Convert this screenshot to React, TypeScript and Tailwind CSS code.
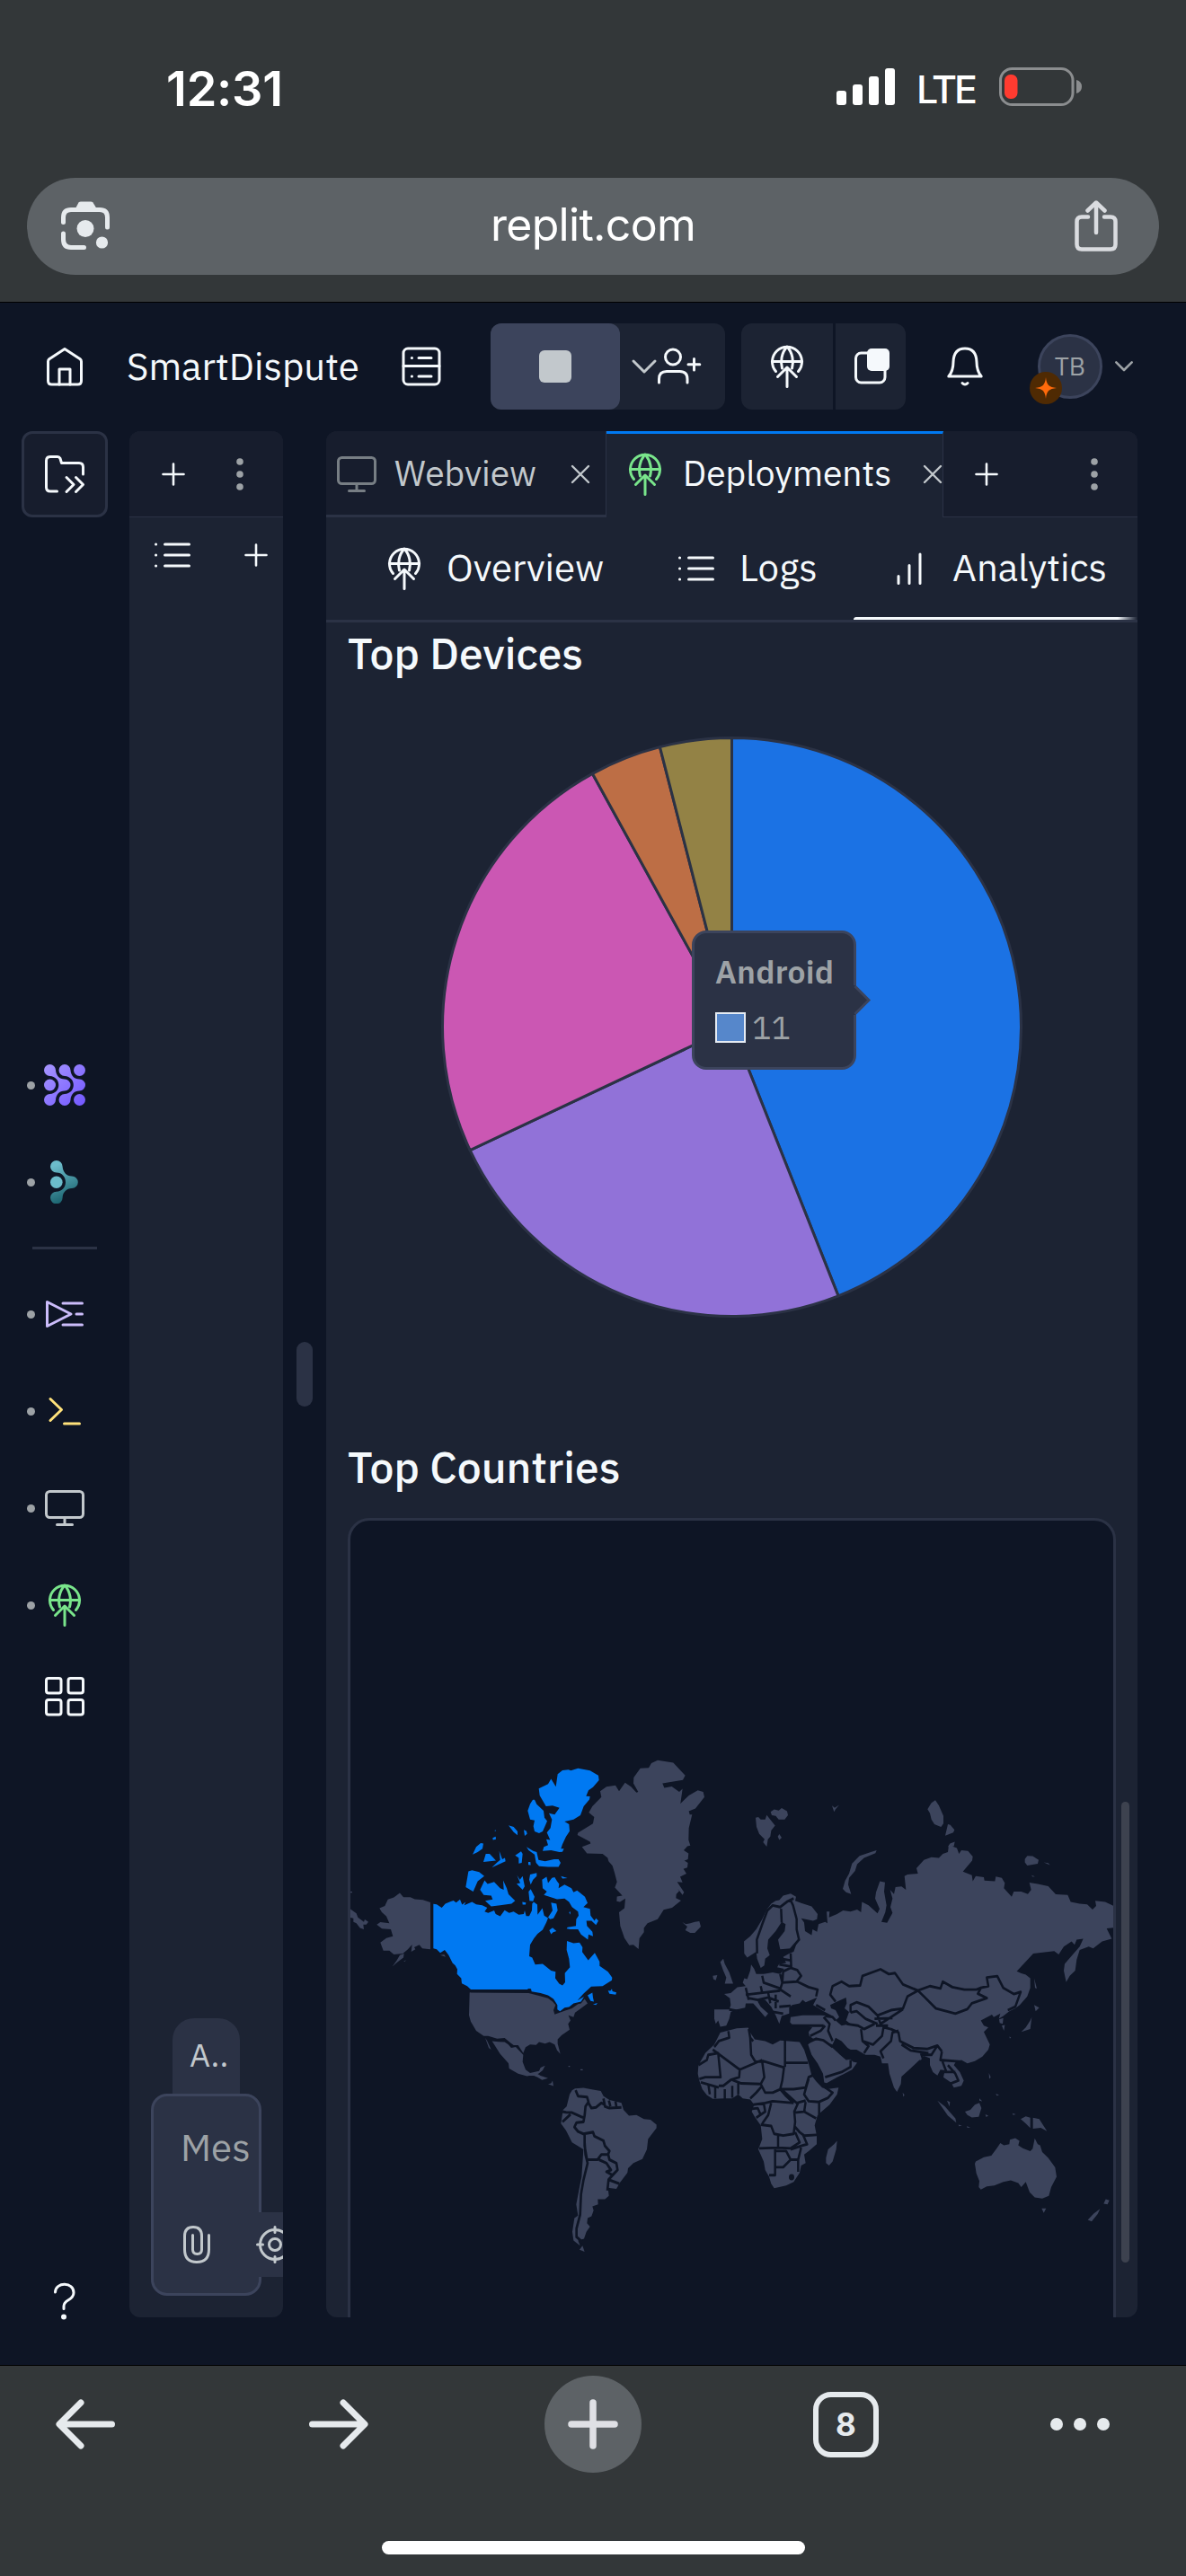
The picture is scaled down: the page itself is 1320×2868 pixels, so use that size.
import React from "react";

type IconProps = {
  w: number;
  h: number;
  color?: string;
  sw?: number;
  className?: string;
  children: React.ReactNode;
};

function Icon({ w, h, color = "#f5f9fc", sw = 3, className = "", children }: IconProps) {
  return (
    <svg
      width={w}
      height={h}
      viewBox={`0 0 ${w} ${h}`}
      fill="none"
      stroke={color}
      strokeWidth={sw}
      strokeLinecap="round"
      strokeLinejoin="round"
      className={`block shrink-0 overflow-visible ${className}`}
    >
      {children}
    </svg>
  );
}

function DeployIcon({ color, className }: { color?: string; className?: string }) {
  return (
    <Icon w={36} h={48} color={color} className={className}>
      <path d="M5.500 29.500 A16.500 16.500 0 1 1 30.500 29.500" />
      <path d="M1.500 18.500 H34.500" />
      <path d="M12.500 26 C10.500 19 11.500 9 18 2 C24.500 9 25.500 19 23.500 26" />
      <path d="M7.500 35.500 L18 25 L28.500 35.500 M18 26 V46.500" />
    </Icon>
  );
}

function MonitorIcon({ color, className }: { color: string; className?: string }) {
  return (
    <Icon w={44} h={40} color={color} className={className}>
      <rect x="1.5" y="1.500" width="41" height="29" rx="4" />
      <path d="M22 31 V38.500 M13.500 38.500 H30.500" />
    </Icon>
  );
}

function ListIcon({ className }: { className?: string }) {
  return (
    <Icon w={40} h={28} className={className}>
      <path d="M11.500 2 H38.500 M11.500 14 H38.500 M11.500 26 H38.500 M1.500 2 h.1 M1.500 14 h.1 M1.500 26 h.1" />
    </Icon>
  );
}

function PlusIcon({ className }: { className?: string }) {
  return (
    <Icon w={26} h={26} sw={2.6} className={className}>
      <path d="M13 1.500 V24.500 M1.500 13 H24.500" />
    </Icon>
  );
}

function KebabIcon({ className }: { className?: string }) {
  return (
    <Icon w={8} h={36} className={className}>
      <g fill="#9da2a6" stroke="none">
        <circle cx="4" cy="4" r="3.800" />
        <circle cx="4" cy="18" r="3.800" />
        <circle cx="4" cy="32" r="3.800" />
      </g>
    </Icon>
  );
}

function CloseIcon({ className }: { className?: string }) {
  return (
    <Icon w={22} h={22} color="#c2c8cc" sw={2.4} className={className}>
      <path d="M2 2 L20 20 M20 2 L2 20" />
    </Icon>
  );
}

function StatusBar() {
  return (
    <div className="flex h-[198px] items-start pt-[75px] font-['Inter']">
      <div className="mt-[2px] ml-[185px] w-[746px] text-[54px] leading-[44px] font-semibold whitespace-nowrap text-white tracking-[-0.2px]">
        12:31
      </div>
      <svg width="65" height="43" viewBox="0 0 65 43" fill="#fff">
        <rect x="0" y="26" width="11" height="16" rx="3" />
        <rect x="18" y="19" width="11" height="23" rx="3" />
        <rect x="36" y="10" width="11" height="32" rx="3" />
        <rect x="54" y="1" width="11" height="41" rx="3" />
      </svg>
      <div className="ml-[24px] w-[92px] text-[43px] leading-[48px] font-medium whitespace-nowrap text-white tracking-[-3.2px]">
        LTE
      </div>
      <svg width="93" height="43" viewBox="0 0 93 43">
        <rect x="1.5" y="1.500" width="80.500" height="40" rx="13" fill="none" stroke="#8b8d8f" strokeWidth="3" />
        <path d="M86 14 Q92 15.500 92 21.500 Q92 27.500 86 29 Z" fill="#8b8d8f" />
        <rect x="6" y="8" width="14.500" height="27" rx="6.500" fill="#ff3b30" />
      </svg>
    </div>
  );
}

function UrlBar() {
  return (
    <div className="mx-[30px] flex h-[108px] items-center justify-between rounded-full bg-[#5d6266] pr-[46px] pl-[38px] font-['Inter']">
      <svg width="56" height="56" viewBox="0 0 56 56" fill="none" stroke="#e6eaed" strokeWidth="5" strokeLinecap="round">
        <path d="M2.500 23.500 V18 Q2.500 9.500 11 9.500 H43 Q51.500 9.500 51.500 18 V29" />
        <path d="M2.500 36 V42.500 Q2.500 51.500 11 51.500 H25.500" />
        <path d="M15.500 9 L19.500 1.500 Q20.500 .5 22 .5 H33 Q34.500 .5 35.500 1.500 L40 9 Z" fill="#e6eaed" stroke="none" />
        <circle cx="27" cy="30.500" r="9.500" fill="#e6eaed" stroke="none" />
        <circle cx="45.500" cy="46" r="6.600" fill="#e6eaed" stroke="none" />
      </svg>
      <span className="-mt-[3px] text-[50px] whitespace-nowrap text-white tracking-[-0.7px]">replit.com</span>
      <svg width="48" height="58" viewBox="0 0 48 58" fill="none" stroke="#dadce0" strokeWidth="4.500" strokeLinecap="round" strokeLinejoin="round">
        <path d="M15 18.500 H8 Q2.500 18.500 2.500 24 V49 Q2.500 54.500 8 54.500 H40 Q45.500 54.500 45.500 49 V24 Q45.500 18.500 40 18.500 H33" />
        <path d="M24 36 V3 M14.500 11.500 L24 2.500 L33.500 11.500" />
      </svg>
    </div>
  );
}

function AppHeader() {
  return (
    <div className="flex h-[144px] shrink-0 items-center border-t border-black pb-px">
      <Icon w={40} h={43} className="ml-[52px]">
        <path d="M1.500 37 V15.500 Q1.500 13.800 2.800 12.800 L20 1.500 L37.200 12.800 Q38.500 13.800 38.500 15.500 V37 Q38.500 41 34.500 41 H5.500 Q1.500 41 1.500 37 Z" />
        <path d="M14 41 V24 H26 V41" />
      </Icon>
      <div className="-mt-[2px] ml-[49px] w-[306px] text-[42px] whitespace-nowrap text-[#f5f9fc]">SmartDispute</div>
      <Icon w={44} h={44}>
        <rect x="2" y="2" width="40" height="40" rx="5" />
        <path d="M2 21.500 H42 M19 12.500 H33 M19 33 H33 M11.300 12.500 h.2 M11.300 33 h.2" />
      </Icon>
      <div className="ml-[55px] flex h-24 w-[261px] items-center rounded-xl bg-[#1c2333]">
        <div className="flex h-24 w-36 items-center justify-center rounded-xl bg-[#3c445c]">
          <div className="h-9 w-9 rounded-md bg-[#c2c8cc]" />
        </div>
        <Icon w={28} h={16} color="#c2c8cc" className="ml-[13px]">
          <path d="M2 2 L14 14 L26 2" />
        </Icon>
        <Icon w={48} h={40} className="ml-px">
          <circle cx="17" cy="9.500" r="8.500" />
          <path d="M1.500 38 V34 Q1.500 25.500 10 25.500 H24.500 Q33 25.500 33 34 V38 M40.500 11.500 V24 M34 17.800 H46.800" />
        </Icon>
      </div>
      <div className="ml-[18px] flex h-24 gap-[3px] overflow-hidden rounded-xl">
        <div className="flex w-[102px] items-center bg-[#1c2333] pl-[33px]">
          <DeployIcon />
        </div>
        <div className="flex w-[78px] items-center bg-[#1c2333] pl-[21px]">
          <Icon w={40} h={40}>
            <rect x="1.500" y="5" width="32.500" height="33" rx="6" />
            <rect x="14" y="0" width="25" height="25" rx="5" fill="#f5f9fc" stroke="none" />
          </Icon>
        </div>
      </div>
      <Icon w={40} h={44} className="ml-[46px]">
        <path d="M1.800 33 Q7 27 7 17 Q7.500 2 20 2 Q32.500 2 33 17 Q33 27 38.200 33 Z" />
        <path d="M17 40.500 Q20 43.500 23 40.500" />
      </Icon>
      <div className="relative ml-[61px] flex h-[72px] w-[72px] items-center justify-center rounded-full border-3 border-[#3c445c] bg-[#2b3245] text-[28px] text-[#9da2a6]">
        TB
        <div className="absolute top-[39px] -left-3 flex h-9 w-9 items-center justify-center rounded-full bg-[#4f2a03]">
          <svg width="24" height="24" viewBox="0 0 24 24" fill="#ff6a0b">
            <path d="M12 0 C12.800 8.500 15.500 11.200 24 12 C15.500 12.800 12.800 15.500 12 24 C11.200 15.500 8.500 12.800 0 12 C8.500 11.200 11.200 8.500 12 0 Z" />
          </svg>
        </div>
      </div>
      <Icon w={20} h={12} color="#9da2a6" sw={2.600} className="ml-[14px]">
        <path d="M1.300 1.300 L10 10 L18.700 1.300" />
      </Icon>
    </div>
  );
}

function DockItem({ children }: { children: React.ReactNode }) {
  return (
    <div className="flex h-[108px] w-full shrink-0 items-center pl-[30px]">
      <div className="h-[9px] w-[9px] rounded-full bg-[#9da2a6]" />
      <div className="flex w-[66px] items-center justify-center">{children}</div>
    </div>
  );
}

function Dock() {
  return (
    <div className="flex w-36 shrink-0 flex-col">
      <div className="ml-6 flex h-24 w-24 shrink-0 items-center justify-center rounded-xl border-3 border-[#2b3245] bg-[#171d2d]">
        <Icon w={44} h={42}>
          <path d="M13.500 40 H6 Q1.500 40 1.500 35.500 V6 Q1.500 1.500 6 1.500 H14 Q16 1.500 17 3.500 L18.500 8.500 H38 Q42.500 8.500 42.500 13 V21" />
          <path d="M24 24.500 L32 32.500 L24 40.500 M34.500 24.500 L42.500 32.500 L34.500 40.500" />
        </Icon>
      </div>
      <div className="mt-[578px] flex flex-col">
        <DockItem>
          <svg width="46" height="46" viewBox="0 0 46 46" fill="url(#violet)">
            <defs>
              <linearGradient id="violet" x1="0" y1="0" x2="46" y2="46" gradientUnits="userSpaceOnUse">
                <stop offset="0" stopColor="#a796ff" />
                <stop offset="1" stopColor="#7257ff" />
              </linearGradient>
            </defs>
            <path d="M6.500 0 A6.500 6.500 0 0 1 13 6.500 C13.500 12.500 17 16.500 23 16.500 A6.500 6.500 0 0 1 23 29.500 C17 29.500 13.500 33.500 13 39.500 A6.500 6.500 0 1 1 6.500 33 C12.500 32.500 16.300 28.500 16.300 23 C16.300 17.500 12.500 13.500 6.500 13 A6.500 6.500 0 0 1 6.500 0 Z" />
            <path d="M23 0 A6.500 6.500 0 0 1 29.500 6.500 C30 12.500 33.500 16.500 39.500 16.500 A6.500 6.500 0 0 1 39.500 29.500 C33.500 29.500 30 33.500 29.500 39.500 A6.500 6.500 0 1 1 23 33 C29 32.500 32.800 28.500 32.800 23 C32.800 17.500 29 13.500 23 13 A6.500 6.500 0 0 1 23 0 Z" />
            <circle cx="6.500" cy="23" r="6.500" />
            <circle cx="39.500" cy="6.500" r="6.500" />
            <circle cx="39.500" cy="39.500" r="6.500" />
          </svg>
        </DockItem>
        <DockItem>
          <svg width="32" height="48" viewBox="0 0 32 48" fill="url(#teal)">
            <defs>
              <linearGradient id="teal" x1="4" y1="6" x2="20" y2="44" gradientUnits="userSpaceOnUse">
                <stop offset="0" stopColor="#6cbccb" />
                <stop offset="1" stopColor="#1b6470" />
              </linearGradient>
            </defs>
            <path d="M6.800 0 A6.800 6.800 0 0 1 13.600 6.800 C14 13 18 17.500 24 17.500 A6.800 6.800 0 0 1 24 31.100 C18 31.100 14 35.500 13.600 41.200 A6.800 6.800 0 1 1 6.800 34.700 C13 34.700 17 30 17 24.300 C17 18.500 13 13.600 6.800 13.600 A6.800 6.800 0 0 1 6.800 0 Z" />
            <circle cx="6.800" cy="24.300" r="6.800" fill="#6cbccb" />
          </svg>
        </DockItem>
      </div>
      <div className="mt-[18px] ml-9 h-[3px] w-[72px] shrink-0 bg-[#2b3245]" />
      <div className="mt-[18px] flex flex-col">
        <DockItem>
          <Icon w={42} h={30} color="#cbbcfa">
            <path d="M1.500 1.500 V28.500 L28 15 Z M19 3 H40.500 M34 15 H40.500 M19 27 H40.500" />
          </Icon>
        </DockItem>
        <DockItem>
          <Icon w={36} h={32} color="#ffe27b">
            <path d="M2 2.500 L14.500 14.500 L2 26.500 M17.500 30 H34.500" />
          </Icon>
        </DockItem>
        <DockItem>
          <MonitorIcon color="#c2c8cc" />
        </DockItem>
        <DockItem>
          <DeployIcon color="#79e58b" />
        </DockItem>
      </div>
      <Icon w={44} h={44} className="mt-[26px] ml-[50px]">
        <rect x="1.500" y="1.500" width="16.500" height="16.500" rx="2.500" />
        <rect x="26" y="1.500" width="16.500" height="16.500" rx="2.500" />
        <rect x="1.500" y="25.500" width="16.500" height="16.500" rx="2.500" />
        <rect x="26" y="25.500" width="16.500" height="16.500" rx="2.500" />
      </Icon>
      <Icon w={24} h={42} className="mt-[631px] ml-[60px]">
        <path d="M1.500 10 C2 -1.800 22 -1.500 22 10.500 C22 19.500 11 18 11 25.500 V28.500" />
        <circle cx="11" cy="37.500" r="1.500" fill="#f5f9fc" />
      </Icon>
    </div>
  );
}

function AssistantPanel() {
  return (
    <div className="flex h-[2100px] w-[171px] shrink-0 flex-col overflow-hidden rounded-xl bg-[#1c2333]">
      <div className="flex h-24 shrink-0 items-center border-b border-[#2b3245] bg-[#171d2d]">
        <PlusIcon className="ml-[36px]" />
        <KebabIcon className="ml-[57px]" />
      </div>
      <div className="flex h-[84px] shrink-0 items-center">
        <ListIcon className="ml-[28px]" />
        <PlusIcon className="ml-[60px]" />
      </div>
      <div className="mt-auto ml-12 flex h-[84px] w-[75px] items-center rounded-t-3xl bg-[#2b3245] pb-[2px] pl-[19px] text-[36px] text-[#c2c8cc]">
        A..
      </div>
      <div className="mb-6 ml-6 h-[225px] w-[123px] shrink-0 rounded-[18px] border-3 border-[#3c445c] bg-[#2b3245]">
        <div className="flex h-[129px] items-center pl-[30px] text-[42px] text-[#9da2a6]">
          <span className="-mt-4 whitespace-nowrap">Mes</span>
        </div>
        <div className="flex h-[72px] w-[150px] items-center bg-[#2b3245] pl-[33px]">
          <Icon w={30} h={42} color="#c2c8cc">
            <path d="M28.500 10.500 V26.500 Q28.500 40.500 15 40.500 Q1.500 40.500 1.500 26.500 V11.500 Q1.500 1.500 11 1.500 Q20.500 1.500 20.500 11.500 V26.500 Q20.500 31.500 15.500 31.500 Q10.500 31.500 10.500 26.500 V10.500" />
          </Icon>
          <Icon w={42} h={42} color="#c2c8cc" className="ml-[51px]">
            <circle cx="21" cy="21" r="16.500" />
            <circle cx="21" cy="21" r="6.500" />
            <path d="M21 1.500 V7.500 M21 34.500 V40.500 M1.500 21 H7.500 M34.500 21 H40.500" />
          </Icon>
        </div>
      </div>
    </div>
  );
}

const SLICES = [
  { label: "Android", value: 11, color: "#1b72e4" },
  { label: "Windows", value: 6, color: "#9172d8" },
  { label: "iPhone", value: 6, color: "#cb57b3" },
  { label: "Macintosh", value: 1, color: "#bd6e45" },
  { label: "Other", value: 1, color: "#938245" },
];

function DevicesPie() {
  const cx = 451.5;
  const cy = 378.5;
  const r = 322;
  const total = SLICES.reduce((sum, s) => sum + s.value, 0);
  const at = (v: number) => {
    const a = (v / total) * Math.PI * 2;
    return `${(cx + r * Math.sin(a)).toFixed(2)} ${(cy - r * Math.cos(a)).toFixed(2)}`;
  };
  let start = 0;
  return (
    <div className="relative h-[756px]">
      <svg width="903" height="756" viewBox="0 0 903 756">
        {SLICES.map((s) => {
          const from = at(start);
          start += s.value;
          return (
            <path
              key={s.label}
              d={`M${cx} ${cy} L${from} A${r} ${r} 0 0 1 ${at(start)} Z`}
              fill={s.color}
              stroke="#2b3245"
              strokeWidth="3"
              strokeLinejoin="round"
            />
          );
        })}
      </svg>
      <div className="absolute top-[271px] left-[407px] h-[155px] w-[183px] rounded-2xl border-3 border-[#3c445c] bg-[#2b3245] pt-[16px] pl-[23px] text-[#9da2a6]">
        <div className="text-[35.5px] leading-[54px] font-semibold whitespace-nowrap tracking-[0.2px]">Android</div>
        <div className="mt-[8px] flex items-center text-[36px] leading-[54px]">
          <span className="mr-[7px] h-[34px] w-[34px] border-2 border-[#e5ebf3] bg-[#5687cb]" />
          11
        </div>
        <svg className="absolute top-[58px] -right-[19px]" width="19" height="34" viewBox="0 0 19 34">
          <path d="M0 0 H1.500 L17 16.500 L1.500 33 H0 Z" fill="#2b3245" />
          <path d="M1.500 1 L17 16.500 L1.500 32" fill="none" stroke="#3c445c" strokeWidth="3" />
        </svg>
      </div>
    </div>
  );
}

const NORTH_AMERICA =
  "M1026 100 L1035 86 1056 78 1108 85 1148 122 1140 135 1072 145 1078 158 1103 154 1128 170 1139 161 1132 204 1160 180 1190 165 1208 170 1212 185 1182 218 1160 226 1163 236 1171 236 1160 275 1159 310 1165 326 1155 328 1143 340 1159 349 1157 366 1145 370 1157 376 1155 390 1142 394 1152 408 1131 417 1139 433 1121 432 1144 462 1139 470 1122 450 1128 458 1118 468 1117 479 1134 486 1104 507 1076 513 1056 540 1022 552 1010 566 1010 578 995 596 992 627 975 615 961 616 945 595 931 560 927 520 945 508 948 480 930 490 919 488 920 474 938 472 920 455 913 448 920 432 912 405 905 385 892 372 889 362 872 350 820 349 803 330 832 320 830 315 788 295 790 289 840 262 844 243 826 230 838 212 868 185 864 168 885 155 915 151 927 168 947 143 967 155 985 172 991 170 975 145 976 128 998 101 Z" +
  "M127 508 L145 502 155 483 175 477 195 464 207 476 230 476 245 482 272 484 297 491 297 628 270 625 260 615 243 622 247 628 233 635 236 614 222 628 205 640 175 643 160 632 140 632 130 608 150 595 172 590 165 570 135 568 118 556 130 549 160 552 150 532 135 520 Z" +
  "M209 640 L207 652 187 665 170 678 185 660 195 645 Z M330 645 L343 643 348 650 Z M208 662 L216 660 211 664 Z" +
  "M28 510 L50 523 55 535 75 548 78 541 90 548 83 556 73 556 75 570 62 566 50 552 40 548 40 538 28 535 Z M28 460 h8 v3 h-8 Z" +
  "M428 754 L625 755 660 763 690 770 705 780 715 790 708 805 712 817 745 807 770 800 790 787 800 785 812 772 822 785 800 800 780 812 775 825 758 820 765 835 757 845 762 862 735 878 722 890 722 902 731 932 720 922 712 905 695 898 680 902 660 898 650 906 630 905 615 913 607 930 590 907 575 907 565 900 545 886 520 888 490 880 475 880 450 865 432 838 426 820 427 790 Z M430 752 L440 770 433 778 Z" +
  "M503 895 L525 897 545 898 557 905 567 915 582 912 607 935 605 955 615 978 630 988 660 982 665 972 680 966 672 980 658 990 620 997 590 990 560 975 558 960 530 932 Z M480 885 L487 895 500 920 492 915 Z M632 992 L650 988 665 996 690 1003 670 1008 655 1000 Z M690 1020 L700 1018 705 1010 708 1026 Z M758 967 h5 v3 h-5 Z M798 977 h8 v3 h-8 Z";

const CANADA =
  "M307 496 L318 497 335 507 347 495 365 489 374 486 383 492 396 483 403 498 415 490 410 500 436 490 450 497 470 500 487 507 478 518 490 522 510 515 515 525 530 532 545 514 560 522 575 518 592 527 609 525 612 515 617 531 627 531 636 515 637 495 642 490 654 498 655 527 671 508 677 530 690 537 684 550 672 571 655 583 643 596 630 615 627 648 637 652 647 672 672 670 700 690 715 693 714 712 727 728 738 733 747 724 746 697 763 680 760 655 752 630 753 604 775 610 795 608 805 622 804 636 824 660 846 638 862 664 862 676 890 693 904 710 903 718 872 735 834 736 808 757 788 777 810 766 800 780 775 785 760 796 745 798 730 808 721 803 721 790 708 772 690 762 665 755 635 751 633 743 625 742 620 745 432 745 420 735 402 727 400 712 386 700 387 686 380 675 371 668 358 645 345 630 330 638 318 628 307 625 Z" +
  "M903 743 L898 749 890 748 895 757 916 760 918 753 905 750 Z M822 762 L838 754 840 768 843 780 832 778 Z M840 788 L855 784 850 790 Z" +
  "M716 155 L722 118 738 107 758 105 766 108 790 101 830 108 858 122 860 136 840 156 825 165 817 182 830 183 828 192 809 212 798 238 775 250 745 256 760 264 762 284 750 300 738 322 733 335 743 335 738 344 728 345 700 340 672 342 676 330 690 325 684 308 697 310 686 288 698 275 703 250 693 232 712 236 728 216 705 210 683 212 662 180 659 160 690 147 700 132 Z" +
  "M622 225 L630 205 639 193 645 193 652 206 675 225 678 245 687 255 672 285 660 290 645 285 641 270 645 253 630 250 Z" +
  "M558 267 L575 272 588 285 588 296 575 287 Z M609 280 L618 284 620 292 612 298 Z M505 304 L515 300 516 308 506 310 Z M511 282 L516 281 514 285 Z M438 352 L450 330 465 319 474 320 471 335 455 345 Z M474 374 L482 350 495 350 516 370 Z M527 342 L537 366 546 362 548 372 502 390 520 375 530 368 Z M580 355 L600 343 605 350 602 376 592 378 592 362 Z M618 330 L640 342 652 345 658 368 680 372 710 366 725 366 732 376 725 388 690 388 660 386 650 376 645 352 625 340 Z M624 374 L631 374 632 383 624 382 Z" +
  "M424 401 L436 398 460 403 477 415 455 430 440 460 415 447 Z M463 455 L478 427 488 438 510 432 530 450 542 455 540 427 552 450 558 468 580 487 568 495 530 500 500 503 480 487 505 483 500 472 475 470 Z" +
  "M586 412 L596 425 605 415 612 445 605 455 585 437 597 435 Z M630 410 L652 406 652 415 640 425 632 440 627 425 Z M625 460 L632 453 645 475 640 488 628 487 Z M604 490 L616 492 615 498 605 498 Z" +
  "M670 425 L685 417 690 435 703 420 712 418 720 430 727 438 725 450 745 440 768 450 775 462 787 457 813 475 822 493 808 505 830 510 832 530 845 545 850 538 858 545 850 557 835 545 818 545 820 560 838 577 840 590 825 585 823 600 800 585 790 570 765 570 752 568 755 564 783 560 784 540 792 530 790 518 770 505 760 490 745 480 720 482 676 470 686 460 672 450 Z M733 415 L755 421 738 422 Z M700 492 L718 495 722 515 708 538 697 540 690 535 705 515 Z M694 572 L705 565 718 575 707 578 700 584 Z M760 520 L765 518 764 527 Z";

const SOUTH_AMERICA =
  "M770 1038 L780 1033 808 1031 840 1036 866 1040 875 1055 895 1066 935 1075 942 1095 960 1112 985 1110 1010 1122 1032 1124 1052 1138 1052 1148 1024 1180 1020 1210 1005 1238 975 1250 957 1265 955 1278 930 1307 918 1325 890 1322 893 1345 880 1355 856 1355 857 1370 838 1376 842 1388 835 1405 822 1410 820 1425 830 1435 818 1450 810 1470 790 1475 797 1490 775 1475 771 1450 778 1410 790 1403 784 1370 795 1320 802 1290 808 1210 770 1190 750 1155 733 1135 740 1095 752 1085 762 1050 Z M795 1502 L805 1490 812 1508 Z" +
  "M1138 549 L1150 555 1165 552 1180 548 1195 546 1200 562 1180 580 1165 580 1148 572 1155 562 Z";

const SOUTH_AMERICA_BORDERS =
  "M782 1038 L790 1055 820 1058 825 1072 815 1085 812 1112 M825 1075 L835 1090 850 1088 868 1075 880 1080 M875 1062 L880 1085 895 1090 935 1088 M893 1068 L898 1085 M915 1070 L918 1085 M738 1100 L750 1102 770 1103 800 1115 812 1118 M738 1130 L765 1108 M812 1112 L808 1130 785 1132 778 1145 790 1158 808 1165 840 1160 845 1172 875 1185 880 1200 895 1215 890 1225 868 1225 855 1240 820 1240 812 1200 812 1165 M812 1190 L815 1225 822 1250 808 1300 800 1340 797 1400 785 1440 785 1465 805 1480 M890 1222 L895 1240 918 1250 922 1270 905 1285 885 1275 900 1270 885 1250 860 1240 M922 1270 L892 1298 928 1310 M892 1298 L888 1330";

const EURASIA =
  "M144 605 L165 590 185 570 205 540 220 512 235 495 250 487 262 485 275 472 300 466 318 475 315 487 335 493 370 503 390 525 388 540 375 545 335 538 345 550 348 575 370 587 373 570 388 577 393 555 415 548 423 552 420 518 430 518 428 535 455 525 475 515 500 518 522 512 535 520 538 490 560 500 590 523 597 510 582 480 585 462 598 430 615 433 612 460 620 500 616 520 603 548 622 551 640 522 633 505 640 480 632 455 645 467 650 447 670 445 685 455 680 415 690 410 725 408 720 392 745 368 770 360 795 362 808 350 825 345 828 325 855 333 862 350 870 340 892 342 908 358 906 370 875 402 905 412 908 430 918 415 945 418 947 428 982 430 985 416 1005 420 1015 435 1012 450 1038 475 1045 460 1070 460 1092 467 1103 455 1097 434 1125 438 1160 444 1185 468 1225 470 1235 490 1265 495 1290 497 1308 512 1320 502 1317 487 1350 490 1380 502 1380 565 1355 567 1372 597 1340 605 1310 625 1295 620 1265 630 1255 658 1250 690 1232 705 1220 723 1212 690 1215 670 1235 650 1265 620 1277 597 1255 600 1248 615 1238 605 1212 620 1195 643 1180 633 1110 640 1055 692 1070 698 1085 702 1100 712 1100 740 1090 765 1065 790 1050 800 1030 808 1010 822 995 830 1000 815 978 825 972 818 935 835 945 850 960 855 945 868 965 905 960 920 940 940 915 953 890 960 870 950 850 957 845 965 865 985 878 1010 870 1025 845 1030 835 1015 810 1000 815 980 800 978 790 995 775 985 765 965 765 945 745 938 735 950 730 950 700 975 670 998 668 1020 655 1043 645 1030 630 990 625 960 605 960 600 940 580 935 550 935 520 920 500 920 490 915 470 895 450 885 440 905 400 895 375 888 362 880 360 868 372 855 350 850 310 852 298 840 300 825 340 820 400 820 440 822 410 808 375 790 388 768 350 782 340 775 330 785 305 790 295 798 295 815 270 822 262 845 250 820 235 795 215 775 200 772 190 780 200 795 225 815 215 825 195 805 175 785 150 785 148 798 120 803 100 810 95 830 85 850 65 853 58 835 50 845 45 830 45 803 95 803 100 790 97 770 78 758 100 755 122 738 150 735 140 725 145 712 155 715 165 690 168 672 178 685 185 700 210 700 240 695 265 700 278 685 255 680 262 670 285 668 275 650 295 640 310 635 325 598 300 625 265 628 258 600 280 575 283 555 270 548 250 575 225 600 222 625 230 645 215 655 212 675 200 682 188 655 185 635 155 652 145 640 Z" +
  "M358 905 L375 892 400 894 420 900 440 915 465 935 485 950 500 948 508 955 522 958 505 978 475 992 455 1000 420 1017 412 1015 408 990 390 960 370 935 Z" +
  "M183 245 L192 243 200 250 215 250 220 237 230 248 248 268 235 282 232 300 224 308 220 329 208 316 213 308 195 292 186 272 Z M233 228 L245 221 260 224 270 217 288 226 291 238 280 250 260 250 250 240 237 238 Z M257 300 L262 293 270 303 262 310 Z M438 210 L447 216 462 208 450 220 445 228 Z" +
  "M587 340 L583 348 545 362 522 380 515 400 495 420 492 440 502 467 485 462 474 452 482 428 495 408 505 378 530 356 570 344 Z M757 220 L770 202 783 194 795 210 810 240 810 262 802 272 780 264 770 250 765 232 Z M816 297 L825 264 833 266 847 280 843 288 Z M825 330 L832 320 848 315 845 328 Z M1082 365 L1090 356 1108 357 1128 368 1125 379 1090 384 1082 375 Z M1145 375 L1160 377 1166 383 Z M1104 412 L1116 416 1108 417 Z" +
  "M65 665 L75 655 80 670 95 695 108 728 80 728 85 710 75 690 Z M40 705 L55 703 50 718 42 715 Z M1113 790 L1130 798 1118 808 Z M1105 825 L1100 860 1070 868 1085 855 1100 835 Z M1005 850 L1015 848 1012 865 Z M1113 712 L1122 742 1116 740 Z M996 832 L1010 828 1008 845 998 842 Z M1030 882 L1036 884 1032 888 Z" +
  "M962 988 L968 1000 963 1005 Z M985 1048 L996 1052 988 1054 Z M790 1068 L815 1085 850 1120 853 1132 825 1112 Z M822 1068 L832 1072 830 1085 Z M882 1100 L900 1095 915 1080 930 1075 937 1090 928 1115 905 1117 890 1110 Z M930 1062 L940 1070 930 1068 Z M950 1108 L960 1112 953 1116 Z M860 1138 L872 1141 862 1143 Z M888 1143 L900 1146 890 1147 Z M1040 1105 L1052 1108 1043 1110 Z" +
  "M1068 1122 L1085 1114 1100 1118 1100 1148 1085 1135 Z M1109 1118 L1130 1122 1156 1157 1135 1147 1109 1150 Z M674 1045 L680 1052 676 1057 Z" +
  "M918 1245 L945 1233 970 1228 990 1205 1000 1192 1012 1198 1030 1195 1032 1182 1050 1177 1064 1185 1060 1198 1075 1207 1100 1215 1108 1208 1115 1178 1125 1195 1133 1198 1140 1218 1160 1235 1183 1262 1188 1290 1170 1320 1162 1345 1140 1353 1115 1350 1098 1335 1085 1305 1070 1320 1060 1308 1035 1300 1010 1305 980 1315 955 1318 935 1327 928 1320 930 1302 920 1280 915 1252 Z M1138 1382 L1153 1382 1145 1395 Z M1352 1355 L1364 1358 1358 1370 1345 1368 Z M1292 1415 L1312 1397 1333 1383 1325 1398 1305 1420 Z";

const EURASIA_BORDERS =
  "M188 640 L187 600 205 555 222 515 240 500 265 505 290 488 310 480 M268 510 L270 550 M300 485 L308 500 320 540 320 570 328 600 300 628 M270 725 L320 722 335 705 322 688 300 682 275 692 272 725 M322 722 L360 738 390 745 385 765 M272 725 L265 745 300 765 M205 705 L210 725 265 742 M265 700 L272 725 M150 760 L200 755 265 748 M160 770 L190 775 225 768 260 780 M200 735 L205 755 M150 740 L160 775 M250 760 L250 800 M225 755 L232 785 M262 795 L300 792 M240 810 L275 815 M265 655 L300 660 M262 672 L300 678 M95 803 L125 808 M300 640 L302 682" +
  "M450 780 L432 760 440 735 470 722 495 735 532 733 540 705 600 686 628 700 648 697 675 730 725 748 765 735 800 742 808 722 840 738 880 745 920 745 935 740 M725 748 L690 765 675 800 635 805 590 820 560 795 520 782 500 790 500 812 M725 748 L745 765 785 800 850 815 890 802 905 785 955 770 925 757 935 740 960 735 955 710 990 706 1010 740 1045 758 1068 752 1050 795 1025 805" +
  "M500 812 L520 808 550 830 590 845 M590 820 L600 845 635 825 675 802 M487 845 L525 850 545 860 580 845 M580 830 L640 828 M585 850 L625 850 M535 860 L540 895 575 905 605 880 610 855 635 860 M540 895 L560 910 545 930 M660 865 L640 870 635 895 600 925 610 945 M635 860 L660 870 665 895 710 915 755 918 790 908 805 925 M670 905 L700 922 760 930 M790 908 L770 935 740 935 M805 925 L800 950 870 955 M805 950 L820 985 M825 965 L850 990 860 1010 835 1018 M735 930 L745 955 M810 985 L850 985" +
  "M410 825 L430 845 425 865 440 895 M415 822 L440 825 450 835 M365 880 L400 865 415 850 M355 900 L385 888 410 893 440 912 M415 1000 L470 985 500 970 500 950 M385 790 L415 805 M298 850 L410 850";

const AFRICA =
  "M88 865 L120 858 158 856 165 870 180 890 215 895 240 905 265 893 330 898 345 920 360 960 370 995 385 1012 405 1030 420 1035 460 1030 455 1050 430 1080 390 1110 380 1140 387 1170 387 1195 360 1215 345 1225 350 1250 335 1257 330 1278 310 1305 285 1315 245 1323 235 1310 228 1290 215 1270 210 1245 192 1210 205 1180 200 1140 180 1115 170 1100 178 1080 165 1065 140 1062 125 1050 105 1062 80 1062 40 1063 20 1052 5 1035 -5 1010 -10 990 -8 965 15 930 45 905 65 870 Z M455 1185 L452 1210 440 1245 428 1257 418 1250 418 1235 425 1210 445 1195 Z";

const AFRICA_BORDERS =
  "M92 866 L95 885 60 895 45 912 M40 920 L130 978 205 950 M165 885 L168 935 182 955 205 955 M160 860 L165 885 175 895 M-8 965 L20 950 25 935 58 930 66 1000 15 1000 -5 1005 M130 978 L128 1000 100 1008 75 1025 60 1025 M105 1008 L135 1018 200 1020 M205 955 L212 1000 200 1020 M205 952 L278 972 M281 893 V970 M281 958 H358 M278 970 L272 1010 265 1035 310 1035 350 1030 360 1000 380 992 M360 1005 L345 1050 360 1070 395 1072 425 1060 440 1045 415 1030 M200 1020 L215 1045 240 1045 265 1035 285 1055 310 1075 M175 1080 L215 1075 240 1070 310 1075 M275 1040 L320 1075 350 1068 M235 1075 L225 1110 205 1135 M200 1138 L235 1142 245 1165 275 1170 310 1165 315 1130 312 1100 325 1075 M350 1072 L345 1100 385 1120 M395 1072 V1108 M312 1103 L350 1100 M315 1145 L330 1160 345 1170 387 1168 M258 1170 L258 1205 195 1207 M258 1205 L300 1207 330 1190 315 1160 M300 1210 L335 1200 355 1195 340 1165 M248 1210 V1285 H228 M248 1262 L275 1262 300 1240 285 1215 248 1215 M300 1240 L325 1240 335 1205 M325 1240 V1275 M0 1015 L60 1030 M25 1020 L30 1050 M48 1030 V1062 M80 1035 V1065 M105 1025 V1060 M125 1018 V1050 M205 1025 L185 1045 165 1062 M170 1092 L190 1090 200 1110 M185 1118 L215 1100 210 1075";

function WorldMap() {
  return (
    <svg width="849" height="887" viewBox="390 1693 849 887" className="block">
      <g transform="translate(380 1930) scale(0.33333 0.38265)" fill="#3c445c">
        <path d={NORTH_AMERICA} />
        <path d={CANADA} fill="#0079f2" />
        <path d={SOUTH_AMERICA} />
        <path d={SOUTH_AMERICA_BORDERS} fill="none" stroke="#0e1525" strokeWidth="8" strokeLinejoin="round" />
      </g>
      <g transform="translate(780 1930) scale(0.33333 0.38265)" fill="#3c445c">
        <path d={EURASIA} />
        <path d={AFRICA} />
        <g fill="none" stroke="#0e1525" strokeWidth="7.5" strokeLinejoin="round">
          <path d={EURASIA_BORDERS} />
          <path d={AFRICA_BORDERS} />
        </g>
        <path
          d="M432 790 L455 780 485 768 487 785 480 800 495 810 485 835 500 845 470 850 450 835 462 825 450 805 435 800 Z"
          fill="#0e1525"
        />
        <circle cx="303" cy="1291" r="9" fill="#0e1525" />
      </g>
    </svg>
  );
}

function MainPanel() {
  return (
    <div className="relative flex h-[2100px] w-[903px] shrink-0 flex-col overflow-hidden rounded-xl bg-[#1c2333]">
      <div className="flex h-24 shrink-0 text-[39px]">
        <div className="flex w-[312px] items-center border-r border-b-3 border-[#2b3245] bg-[#171d2d] pt-[2px] text-[#c2c8cc]">
          <MonitorIcon color="#777e84" className="ml-[12px]" />
          <span className="ml-[20px] w-[196px] whitespace-nowrap">Webview</span>
          <CloseIcon />
        </div>
        <div className="flex w-[375px] items-center overflow-hidden border-t-3 border-r border-t-[#0079f2] border-r-[#2b3245] pb-[4px] text-[#f5f9fc]">
          <DeployIcon color="#79e58b" className="ml-[25px]" />
          <span className="ml-[24px] w-[270px] whitespace-nowrap">Deployments</span>
          <CloseIcon />
        </div>
        <div className="flex flex-1 items-center border-b border-[#2b3245] bg-[#171d2d]">
          <PlusIcon className="ml-[35px]" />
          <KebabIcon className="ml-[103px]" />
        </div>
      </div>
      <div className="flex h-[117px] shrink-0 border-b-3 border-[#2b3245] text-[42px] text-[#f5f9fc]">
        <div className="flex items-center pl-[69px]">
          <DeployIcon />
          <span className="-mt-[3px] ml-[29px] w-[258px] whitespace-nowrap">Overview</span>
        </div>
        <div className="flex items-center">
          <ListIcon />
          <span className="-mt-[3px] ml-[28px] w-[127px] whitespace-nowrap">Logs</span>
        </div>
        <div className="relative flex flex-1 items-center pl-[48px]">
          <Icon w={28} h={36}>
            <path d="M2 26.500 V34.500 M14 14.500 V34.500 M26 2 V34.500" />
          </Icon>
          <span className="-mt-[3px] ml-[34px] whitespace-nowrap">Analytics</span>
          <div className="absolute right-0 bottom-0 left-0 h-[3px] rounded-tl-[3px] bg-linear-to-r from-[#f5f9fc] from-[93%] to-[#1c2333]" />
        </div>
      </div>
      <h2 className="flex h-[72px] shrink-0 items-center pb-[4px] pl-6 text-[48px] font-medium whitespace-nowrap text-[#f5f9fc]">
        Top Devices
      </h2>
      <DevicesPie />
      <h2 className="mt-[77px] flex h-[72px] shrink-0 items-center pb-[2px] pl-6 text-[48px] font-medium whitespace-nowrap text-[#f5f9fc]">
        Top Countries
      </h2>
      <div className="mx-6 mt-5 h-[950px] shrink-0 overflow-hidden rounded-3xl border-3 border-[#2b3245] bg-[#0e1525]">
        <WorldMap />
      </div>
      <div className="absolute top-[1526px] right-[9px] h-[513px] w-[9px] rounded-full bg-[#3d424f]" />
    </div>
  );
}

function BrowserToolbar() {
  return (
    <div className="flex h-[235px] shrink-0 flex-col border-t border-black bg-[#333739] font-['Inter']">
      <div className="flex h-[130px] items-center">
        <Icon w={66} h={56} color="#e6eaed" sw={7} className="ml-[62px]">
          <path d="M28 4 L4 28 L28 52 M5 28 H62.500" />
        </Icon>
        <Icon w={66} h={56} color="#e6eaed" sw={7} className="ml-[216px]">
          <path d="M38 4 L62 28 L38 52 M61 28 H3.500" />
        </Icon>
        <div className="ml-[196px] flex h-[108px] w-[108px] items-center justify-center rounded-full bg-[#5d6266]">
          <Icon w={56} h={56} color="#dfe0e5" sw={7.500}>
            <path d="M28 4 V52 M4 28 H52" />
          </Icon>
        </div>
        <div className="ml-[191px] flex h-[73px] w-[73px] items-center justify-center rounded-[20px] border-[6px] border-[#e6eaed] text-[35px] font-bold text-[#e6eaed]">
          8
        </div>
        <div className="ml-[191px] flex gap-[12px]">
          <div className="h-[14px] w-[14px] rounded-full bg-[#e6eaed]" />
          <div className="h-[14px] w-[14px] rounded-full bg-[#e6eaed]" />
          <div className="h-[14px] w-[14px] rounded-full bg-[#e6eaed]" />
        </div>
      </div>
      <div className="mx-auto mt-[65px] h-[15px] w-[471px] rounded-full bg-white" />
    </div>
  );
}

export default function App() {
  return (
    <div className="flex h-[2868px] w-[1320px] flex-col overflow-hidden bg-[#0e1525] font-['IBM_Plex_Sans','Noto_Sans',sans-serif]">
      <div className="h-[336px] shrink-0 bg-[#333739]">
        <StatusBar />
        <UrlBar />
      </div>
      <AppHeader />
      <div className="flex h-[2153px] shrink-0">
        <Dock />
        <AssistantPanel />
        <div className="flex h-[2100px] w-12 shrink-0 items-center justify-center">
          <div className="h-[72px] w-[18px] rounded-full bg-[#2b3245]" />
        </div>
        <MainPanel />
      </div>
      <BrowserToolbar />
    </div>
  );
}
